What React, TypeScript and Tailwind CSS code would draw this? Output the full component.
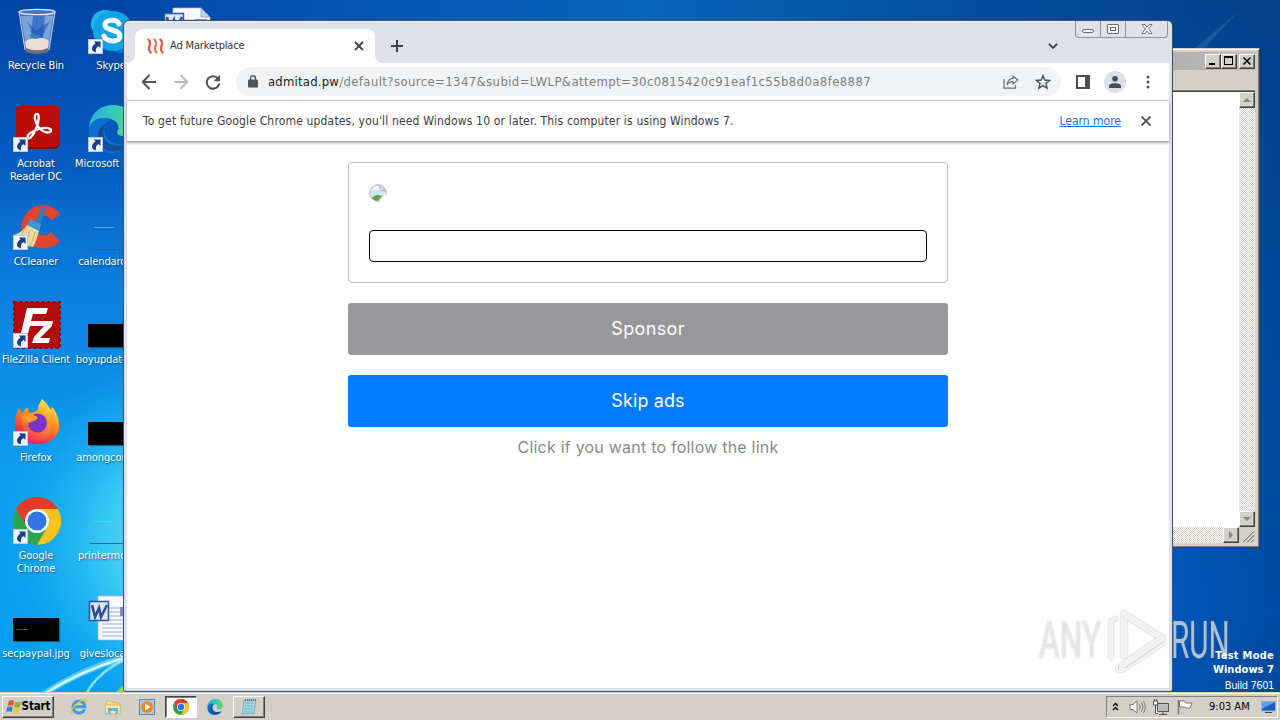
import { ReactNode } from 'react'

interface IShortcut {
    id: string
    label: string
    icon: ReactNode
    arrow?: boolean
}

// Icons of the desktop, all drawn in a 48x48 box
function RecycleBin() {
    return (
        <svg viewBox="0 0 48 48" className="h-12 w-12">
            <path d="M6 5 12 43q12 5 24 0L42 5z" fill="#6f9cdc" fillOpacity=".55" />
            <path d="M8 9l5 31 4-5 3-26zM40 9l-5 31-5-8 2-24z" fill="#dbe9fb" fillOpacity=".4" />
            <path d="M14 14l9 10 14-10-8 16-10-4z" fill="#1d51ae" fillOpacity=".55" />
            <path d="M12 35q5-5 11-3 8-3 13 2l-1 7q-11 5-22 0z" fill="#eadfd2" />
            <path d="M12 41q12 5 24 0l-1 4q-11 4-22 0z" fill="#77706a" />
            <ellipse cx="24" cy="5" rx="18" ry="2.6" fill="#3f75c6" stroke="#e5e8ee" strokeWidth="1.3" />
            <path d="M6 5l6 38M42 5l-6 38" stroke="#c6d9f3" strokeWidth="1" />
        </svg>
    )
}

function Acrobat() {
    return (
        <svg viewBox="0 0 48 48" className="h-12 w-12">
            <rect x="3" y="1" width="44" height="43" rx="6" fill="#7d0f12" />
            <rect x="3" y="0" width="44" height="42" rx="6" fill="#b80e06" />
            <path
                d="M24 9c-4 0-2 9 2 14 4 4 10 6 12 3 1-3-5-4-12-2-7 2-13 6-11 9 3 2 8-8 10-15 1-5 1-9-1-9z"
                fill="none"
                stroke="#fff"
                strokeWidth="2.3"
            />
        </svg>
    )
}

function CCleaner() {
    return (
        <svg viewBox="0 0 48 48" className="h-12 w-12">
            <path
                d="M47 12C41-1 20-2 11 14c-7 14 1 29 15 31 8 1 16-1 21-7l-9-9c-5 5-12 4-15-1-4-7 0-14 6-15 4-1 7 1 9 4z"
                fill="#e2452f"
            />
            <path d="M29 3l4 1-6 18-5-2z" fill="#2a7fb5" />
            <path d="M17 16l11 5-2 8-12-6z" fill="#3a9ad0" />
            <path d="M14 22l12 6q-2 9-6 16Q7 43 1 32q9-3 13-10z" fill="#f1d5a0" />
            <path d="M12 25q-2 6-6 9M17 27q-1 8-6 13M22 29q-1 7-5 14" stroke="#d3ae72" fill="none" />
        </svg>
    )
}

function FileZilla() {
    return (
        <svg viewBox="0 0 48 48" className="h-12 w-12">
            <rect x="1" y="1" width="46" height="46" fill="#b30a0a" stroke="#8d0507" strokeWidth="2" strokeDasharray="3 2.5" />
            <path d="M14 7h21l-2 6H20l-2 7h10l-2 5H17l-4 15H6z" fill="#fff" />
            <path d="M24 20h16l-1 5-12 12h10l-1 5H19l2-6 10-11h-8z" fill="#fff" />
        </svg>
    )
}

function Firefox() {
    return (
        <svg viewBox="0 0 48 48" className="h-12 w-12">
            <defs>
                <linearGradient id="fox" x1=".8" y1="0" x2=".3" y2="1">
                    <stop offset="0" stopColor="#fff44f" />
                    <stop offset=".4" stopColor="#ff9a1f" />
                    <stop offset=".75" stopColor="#ff4136" />
                    <stop offset="1" stopColor="#e31587" />
                </linearGradient>
                <linearGradient id="foxBody" x1=".7" y1="0" x2=".3" y2="1">
                    <stop offset="0" stopColor="#ffb52a" />
                    <stop offset=".5" stopColor="#ff7139" />
                    <stop offset="1" stopColor="#f0305a" />
                </linearGradient>
            </defs>
            <path
                d="M29 0c4 4 7 7 9 11l1-3c5 5 8 14 7 22-2 9-10 15-21 15C12 45 2 37 2 25c0-6 1-9 4-16l3 5 5-6 3 6c5-1 7-2 8-4 0-4 2-6 4-10z"
                fill="url(#fox)"
            />
            <path d="M9 17c5-3 11-1 16 2l10 4c7 10 0 20-10 20S8 32 9 17z" fill="url(#foxBody)" />
            <circle cx="24.500" cy="24" r="9.500" fill="#7a35c7" />
            <path d="M12 16c4-2 9-1 13 3-2 3-6 3-9 5-2-2-4-5-4-8z" fill="#ff9a2a" />
        </svg>
    )
}

function Chrome({ className }: { className: string }) {
    return (
        <svg viewBox="0 0 48 48" className={className}>
            <circle cx="24" cy="24" r="24" fill="#2da44e" />
            <path d="M3.2 12A24 24 0 0 1 44.8 12H24a12 12 0 0 0-10.4 18z" fill="#e33b2e" />
            <path d="M44.8 12A24 24 0 0 1 24 48l10.4-18A12 12 0 0 0 24 12z" fill="#fcc31e" />
            <circle cx="24" cy="24" r="12" fill="#fff" />
            <circle cx="24" cy="24" r="9.6" fill="#3374e0" />
        </svg>
    )
}

function Edge({ className }: { className: string }) {
    return (
        <svg viewBox="0 0 48 48" className={className}>
            <defs>
                <linearGradient id="edgeTop" x1="0" y1=".3" x2="1" y2=".5">
                    <stop offset="0" stopColor="#27b0e2" />
                    <stop offset=".6" stopColor="#39cdb3" />
                    <stop offset="1" stopColor="#66d84f" />
                </linearGradient>
            </defs>
            <path d="M1 23C2 9 12 0 25 0c13 0 23 9 23 19 0 8-6 12-12 12-5 0-7-2-7-4 2-2 3-9-4-12C17 11 5 13 1 23z" fill="url(#edgeTop)" />
            <path d="M1 23c3-9 14-13 23-8-6 1-9 7-7 14 3 9 14 13 27 8-5 7-12 11-20 11C10 48 0 37 1 23z" fill="#0d72ce" />
            <path d="M22 16c-6 3-9 11-5 18 5 8 17 8 27 3-10 13-27 12-33 1-4-9 1-19 11-22z" fill="#124f9f" />
        </svg>
    )
}

function Skype() {
    return (
        <svg viewBox="0 0 48 48" className="h-12 w-12">
            <circle cx="17" cy="17" r="14" fill="#1fb5ea" />
            <circle cx="33" cy="33" r="13" fill="#0b76c8" />
            <circle cx="25" cy="24" r="20" fill="#12a4e4" />
            <path
                d="M31 17c-2-5-14-5-14 1 0 6 15 4 15 11 0 7-14 6-16 0"
                fill="none"
                stroke="#fff"
                strokeWidth="5"
                strokeLinecap="round"
            />
        </svg>
    )
}

function WordFile() {
    return (
        <svg viewBox="0 0 48 48" className="h-12 w-12">
            <path d="M10 1h28l9 9v35H10z" fill="#f7f9ff" stroke="#a9b8dd" strokeWidth=".7" />
            <path d="M38 1v9h9z" fill="#c3cfe8" stroke="#8294c4" strokeWidth=".7" />
            <path d="M14 13h30M14 17h30M14 21h30M14 25h30M14 29h30M14 33h30M14 37h30M14 41h30" stroke="#98acdb" />
            <rect x="32" y="12" width="12" height="9" fill="#7990b8" />
            <rect x="1.5" y="6.500" width="19" height="19" fill="#dbe5fa" stroke="#2f55a8" strokeWidth="1.5" />
            <path d="M4 10l3 12 4-9 2 9 6-12" fill="none" stroke="#2a4f9f" strokeWidth="2.6" />
        </svg>
    )
}

function BlackThumb({ faint }: { faint?: boolean }) {
    return (
        <div className="flex h-12 w-12 items-end pb-[2px]">
            <div className="flex h-[23px] w-[46px] items-center bg-black pl-[3px] shadow-[1px_1px_1px_rgba(0,0,0,.4)]">
                {faint && <div className="h-px w-3 bg-[#5a4b45]" />}
            </div>
        </div>
    )
}

function BlankThumb() {
    return (
        <div className="flex h-12 w-12 flex-col justify-between pt-[24px] pb-px">
            <div className="ml-[6px] h-px w-5 bg-[#8fb8d8]/70" />
            <div className="ml-[2px] h-px bg-[#1c6a94]" />
        </div>
    )
}

function ShortcutArrow() {
    return (
        <svg viewBox="0 0 15 15" className="absolute top-8 left-0 h-[15px] w-[15px]">
            <rect x=".5" y=".5" width="14" height="14" fill="#eef5fd" stroke="#b9c9dc" />
            <path d="M6 2.500h6.500V9L10.500 7C8 8.500 7.500 10 8 13.500 3 12 2.500 8 7.500 4.500z" fill="#173f86" />
        </svg>
    )
}

const shortcuts: IShortcut[] = [
    { id: 'bin', label: 'Recycle Bin', icon: <RecycleBin /> },
    { id: 'acrobat', label: 'Acrobat Reader DC', icon: <Acrobat />, arrow: true },
    { id: 'ccleaner', label: 'CCleaner', icon: <CCleaner />, arrow: true },
    { id: 'filezilla', label: 'FileZilla Client', icon: <FileZilla />, arrow: true },
    { id: 'firefox', label: 'Firefox', icon: <Firefox />, arrow: true },
    { id: 'chrome', label: 'Google Chrome', icon: <Chrome className="h-12 w-12" />, arrow: true },
    { id: 'secpaypal', label: 'secpaypal.jpg', icon: <BlackThumb faint /> },
    { id: 'skype', label: 'Skype', icon: <Skype />, arrow: true },
    { id: 'edge', label: 'Microsoft Edge', icon: <Edge className="h-12 w-12" />, arrow: true },
    { id: 'calendar', label: 'calendarc.jpg', icon: <BlankThumb /> },
    { id: 'boy', label: 'boyupdate.jpg', icon: <BlackThumb /> },
    { id: 'among', label: 'amongcon.jpg', icon: <BlackThumb /> },
    { id: 'printer', label: 'printermo.jpg', icon: <BlankThumb /> },
    { id: 'gives', label: 'giveslocal.rtf', icon: <WordFile /> },
    { id: 'doc', label: '', icon: <WordFile /> }
]

function Shortcut({ label, icon, arrow, id }: IShortcut) {
    // Only Acrobat and Chrome wrap on two lines
    const wrap = id === 'acrobat' || id === 'chrome'
    return (
        <div className="flex h-[98px] w-[75px] flex-col items-center">
            <div className="relative -ml-px h-12 w-12">
                {icon}
                {arrow && <ShortcutArrow />}
            </div>
            <span
                className={`${wrap ? 'w-[62px]' : 'whitespace-nowrap'} mt-1 -ml-[3px] text-center text-[11px] leading-[13px] tracking-[-0.08px] text-white [text-shadow:1px_1px_2px_rgba(0,0,0,.5)]`}
            >
                {label}
            </span>
        </div>
    )
}

function Wallpaper() {
    return (
        <svg viewBox="0 0 1280 720" className="absolute inset-0 h-full w-full">
            <defs>
                <linearGradient id="sky" x1="0" y1="0" x2="0" y2="1">
                    <stop offset="0" stopColor="#0345a5" />
                    <stop offset=".2" stopColor="#0558bd" />
                    <stop offset=".4" stopColor="#0a7fde" />
                    <stop offset=".65" stopColor="#0d9cee" />
                    <stop offset="1" stopColor="#05a0f0" />
                </linearGradient>
                <radialGradient id="glow" gradientUnits="userSpaceOnUse" cx="190" cy="540" r="190">
                    <stop offset="0" stopColor="#7cecf6" />
                    <stop offset=".45" stopColor="#43d3f5" stopOpacity=".8" />
                    <stop offset="1" stopColor="#1aaef2" stopOpacity="0" />
                </radialGradient>
                <linearGradient id="top" x1="0" y1="0" x2="1" y2="0">
                    <stop offset="0" stopColor="#0348aa" />
                    <stop offset=".45" stopColor="#0765bb" />
                    <stop offset=".75" stopColor="#034c9e" />
                    <stop offset="1" stopColor="#034185" />
                </linearGradient>
                <linearGradient id="side" x1="0" y1="0" x2="0" y2="1">
                    <stop offset="0" stopColor="#02458f" />
                    <stop offset=".5" stopColor="#0152ac" />
                    <stop offset=".85" stopColor="#0058bc" />
                    <stop offset="1" stopColor="#0050ae" />
                </linearGradient>
                <linearGradient id="dark" x1="0" y1="0" x2="1" y2="0">
                    <stop offset="0" stopColor="#003a80" stopOpacity="0" />
                    <stop offset="1" stopColor="#003a80" stopOpacity=".4" />
                </linearGradient>
            </defs>
            <rect width="1280" height="720" fill="url(#sky)" />
            <rect width="200" height="720" fill="url(#glow)" />
            <rect x="124" width="1156" height="24" fill="url(#top)" />
            <rect x="1168" width="112" height="720" fill="url(#side)" />
            <rect x="1168" width="112" height="720" fill="url(#dark)" />
            <path d="M1195 48L1238 12 1205 48z" fill="#5b9bd4" fillOpacity=".25" />
            <path d="M44 694Q80 670 126 657" fill="none" stroke="#7fe3fb" strokeOpacity=".6" strokeWidth="6" />
            <path d="M44 694Q80 671 126 657" fill="none" stroke="#e3fdff" strokeOpacity=".9" strokeWidth="2.500" />
            <path d="M86 694Q98 672 126 659" fill="none" stroke="#b8f6fb" strokeOpacity=".7" strokeWidth="2.500" />
            <path d="M114 694l12-12v12z" fill="#8bd84c" />
        </svg>
    )
}

const classicButton =
    'flex items-center justify-center border border-t-white border-l-white border-r-[#404040] border-b-[#404040] bg-[#d4d0c8] shadow-[inset_-1px_-1px_0_#808080]'

const scrollTrack = 'bg-[repeating-conic-gradient(#ffffff_0_25%,#d4d0c8_0_50%)] bg-[length:2px_2px]'

// Old style window, mostly hidden behind the browser
function ClassicWindow() {
    return (
        <div className="absolute top-12 left-[900px] flex h-[500px] w-[360px] flex-col border border-t-[#d4d0c8] border-l-[#d4d0c8] border-r-[#404040] border-b-[#404040] bg-[#d4d0c8] px-1 pt-[3px] pb-1 shadow-[inset_1px_1px_0_#fff,inset_-1px_-1px_0_#808080]">
            <div className="flex h-[18px] items-center justify-end bg-linear-to-r from-[#808080] to-[#c0c0c0]">
                <div className={`${classicButton} h-[15px] w-4`}>
                    <svg viewBox="0 0 12 12" className="h-3 w-3">
                        <path d="M2 8h6v2H2z" />
                    </svg>
                </div>
                <div className={`${classicButton} h-[15px] w-4`}>
                    <svg viewBox="0 0 12 12" className="h-3 w-3">
                        <path d="M1 1h9v9H1zM2 3v6h7V3z" fillRule="evenodd" />
                    </svg>
                </div>
                <div className={`${classicButton} ml-0.5 h-[15px] w-4`}>
                    <svg viewBox="0 0 12 12" className="h-3 w-3">
                        <path d="M2.500 2.500l7 7M9.500 2.500l-7 7" stroke="#000" strokeWidth="1.6" />
                    </svg>
                </div>
            </div>
            <div className="h-[21px] border-b border-[#808080]" />
            <div className="flex flex-1 border-t border-[#404040] bg-white">
                <div className="flex-1" />
                <div className={`${scrollTrack} flex w-4 flex-col justify-between`}>
                    <div className={`${classicButton} h-4`}>
                        <svg viewBox="0 0 8 4" className="h-1 w-2">
                            <path d="M4 0l4 4H0z" fill="#808080" />
                        </svg>
                    </div>
                    <div className={`${classicButton} h-4`}>
                        <svg viewBox="0 0 8 4" className="h-1 w-2">
                            <path d="M4 4l4-4H0z" fill="#808080" />
                        </svg>
                    </div>
                </div>
            </div>
            <div className="flex h-4">
                <div className={`${scrollTrack} flex flex-1 justify-end`}>
                    <div className={`${classicButton} w-4`}>
                        <svg viewBox="0 0 4 8" className="h-2 w-1">
                            <path d="M0 0l4 4-4 4z" fill="#808080" />
                        </svg>
                    </div>
                </div>
                <svg viewBox="0 0 16 16" className="h-4 w-4">
                    <path d="M4 15L15 4M8 15l7-7M12 15l3-3" stroke="#808080" strokeWidth="1.5" />
                    <path d="M3 15L15 3M7 15l8-8M11 15l4-4" stroke="#fff" strokeWidth=".7" />
                </svg>
            </div>
        </div>
    )
}

function TabStrip() {
    return (
        <div className="flex h-[42px] items-end pl-2">
            <div className="relative flex h-[34px] w-60 items-center rounded-t-lg bg-white pr-[11px] pl-[11px]">
                <svg viewBox="0 0 18 16" className="h-4 w-[18px]" fill="none" strokeWidth="2.300" strokeLinecap="round">
                    <path d="M2.500 1.500q2.500 3 1 6.500t1 6.500" stroke="#e2583f" />
                    <path d="M8.500 1.500q2.500 3 1 6.500t1 6.500" stroke="#e77a5e" />
                    <path d="M14.500 1.500q2.500 3 1 6.500t1 6.500" stroke="#db5a50" />
                </svg>
                <span className="ml-1.5 flex-1 pt-px text-[11px] tracking-[-0.15px] text-[#333]">Ad Marketplace</span>
                <svg viewBox="0 0 10 10" className="h-2.5 w-2.5">
                    <path d="M1 1l8 8M9 1L1 9" stroke="#3c4043" strokeWidth="1.8" />
                </svg>
                <svg viewBox="0 0 8 8" className="absolute bottom-0 -left-2 h-2 w-2">
                    <path d="M8 0v8H0a8 8 0 0 0 8-8z" fill="#fff" />
                </svg>
                <svg viewBox="0 0 8 8" className="absolute -right-2 bottom-0 h-2 w-2">
                    <path d="M0 0v8h8a8 8 0 0 1-8-8z" fill="#fff" />
                </svg>
            </div>
            <svg viewBox="0 0 12 12" className="mb-[11px] ml-4 h-3 w-3">
                <path d="M6 0v12M0 6h12" stroke="#3c4043" strokeWidth="2" />
            </svg>
            <svg viewBox="0 0 10 6" className="mr-[111px] mb-[14px] ml-auto h-1.5 w-2.5">
                <path d="M.8.800L5 5 9.200.800" fill="none" stroke="#3c4043" strokeWidth="1.8" />
            </svg>
        </div>
    )
}

function CaptionButtons() {
    return (
        <div className="absolute top-0 right-1 flex h-[17px] rounded-b-[4px] border border-t-0 border-[#8c929e] bg-[#dfe2ea]">
            <div className="flex w-[25px] items-center justify-center border-r border-[#8c929e]">
                <div className="mt-1 h-1 w-3 rounded-[2px] border border-[#696d77] bg-white" />
            </div>
            <div className="flex w-[25px] items-center justify-center border-r border-[#8c929e]">
                <div className="flex h-[10px] w-3 items-center justify-center rounded-[1px] border border-[#696d77] bg-white">
                    <div className="h-1 w-1.5 border border-[#696d77]" />
                </div>
            </div>
            <div className="flex w-[41px] items-center justify-center">
                <svg viewBox="0 0 12 10" className="h-2.5 w-3">
                    <path d="M1 .5h3L6 3 8 .5h3L7.700 5 11 9.500H8L6 7 4 9.500H1L4.300 5z" fill="#fff" stroke="#696d77" strokeWidth=".9" />
                </svg>
            </div>
        </div>
    )
}

function Toolbar() {
    return (
        <div className="flex h-[38px] items-center border-b border-[#d4d6d9] bg-white pl-[14px]">
            <svg viewBox="0 0 16 16" className="h-4 w-4" fill="none" stroke="#505357" strokeWidth="2">
                <path d="M8.500 1L1.800 8l6.700 7M2 8h13" />
            </svg>
            <svg viewBox="0 0 16 16" className="ml-4 h-4 w-4" fill="none" stroke="#b9bbbe" strokeWidth="2">
                <path d="M7.500 1l6.700 7-6.700 7M14 8H1" />
            </svg>
            <svg viewBox="0 0 16 16" className="ml-4 h-4 w-4" fill="none">
                <path d="M13 4.500A6.300 6.300 0 1 0 14.300 9.500" stroke="#505357" strokeWidth="2" />
                <path d="M15 .8v6.400H8.600z" fill="#505357" />
            </svg>
            <div className="ml-[15px] flex h-[29px] w-[825px] items-center rounded-full bg-[#f1f3f4] pl-3">
                <svg viewBox="0 0 10 13" className="h-[13px] w-2.5">
                    <rect y="4.500" width="10" height="8" rx="1" fill="#505357" />
                    <path d="M2.500 5V3.200a2.500 2.500 0 0 1 5 0V5" fill="none" stroke="#505357" strokeWidth="1.4" />
                </svg>
                <span className="ml-[10px] flex-1 pt-px text-[13px] whitespace-nowrap text-[#7b7f83]">
                    <span className="tracking-[0.2px] text-[#202124]">admitad.pw</span>
                    <span className="tracking-[0.39px]">
                        /default?source=1347&amp;subid=LWLP&amp;attempt=30c0815420c91eaf1c55b8d0a8fe8887
                    </span>
                </span>
                <svg viewBox="0 0 16 14" className="h-3.5 w-4" fill="none" stroke="#696c70" strokeWidth="1.2">
                    <path d="M1 4v9.200h11.500V10" />
                    <path d="M10 1l4.800 4L10 9V6.700Q6 6.500 4 10 4.500 4 10 3.300z" />
                </svg>
                <svg viewBox="0 0 24 24" className="mr-[10px] ml-4 h-4 w-4" fill="none" stroke="#505357" strokeWidth="2.200">
                    <path d="M12 2.500l2.700 6.600 7.100.6-5.400 4.600 1.700 7L12 17.500l-6.100 3.800 1.700-7-5.400-4.600 7.100-.6z" />
                </svg>
            </div>
            <svg viewBox="0 0 14 14" className="ml-[15px] h-3.5 w-3.5">
                <path d="M0 0h14v14H0zM2 2v10h7V2z" fill="#4c4f53" fillRule="evenodd" />
            </svg>
            <div className="ml-[14px] flex h-[22px] w-[22px] items-center justify-center rounded-full bg-[#dbe0e8]">
                <svg viewBox="0 0 12 12" className="h-3 w-3" fill="#454d5a">
                    <circle cx="6" cy="2.800" r="2.800" />
                    <path d="M0 12v-1.500Q0 7.300 6 7.300t6 3.200V12z" />
                </svg>
            </div>
            <svg viewBox="0 0 4 14" className="ml-5 h-3.5 w-1" fill="#505357">
                <circle cx="2" cy="2" r="1.500" />
                <circle cx="2" cy="7" r="1.500" />
                <circle cx="2" cy="12" r="1.500" />
            </svg>
        </div>
    )
}

function InfoBar() {
    return (
        <div className="z-10 flex h-[41px] items-center border-b border-[#a9a9a9] bg-white pl-4 text-[12px] shadow-[0_1px_3px_rgba(0,0,0,.35)]">
            <span className="flex-1 tracking-[0.165px] whitespace-nowrap text-[#3c3c3c]">
                To get future Google Chrome updates, you'll need Windows 10 or later. This computer is using Windows 7.
            </span>
            <span className="text-[#1a6fd0] underline">Learn more</span>
            <svg viewBox="0 0 10 10" className="mr-[18px] ml-5 h-2.5 w-2.5">
                <path d="M.5.500l9 9M9.500.500l-9 9" stroke="#4a4d51" strokeWidth="1.8" />
            </svg>
        </div>
    )
}

function Page() {
    return (
        <div className="flex flex-1 flex-col items-center bg-white pt-5 font-['Inter',sans-serif]">
            <div className="h-[121px] w-[600px] rounded-[4px] border border-[#c0c0c0] p-5">
                <svg viewBox="0 0 18 18" className="mt-px h-[18px] w-[18px]">
                    <circle cx="9" cy="9" r="8.300" fill="#d5e4f8" stroke="#b4b8c0" />
                    <path d="M3 5q3-3.500 7-3.500L11 6H3z" fill="#fff" />
                    <path d="M10 1.500L16.500 7 11 5.500z" fill="#fff" stroke="#909499" strokeWidth=".7" />
                    <path d="M3 14q4-5 10-2l-4 5q-4 0-6-3z" fill="#56a844" />
                    <path d="M10 17L17 9v5l-4 3z" fill="#fff" />
                </svg>
                <div className="mt-7 h-8 rounded-[4px] border border-black bg-white" />
            </div>
            <button className="mt-5 h-[52px] w-[600px] rounded-[3px] bg-[#98979c] pb-0.5 text-[18px] tracking-[0.35px] text-white">
                Sponsor
            </button>
            <button className="mt-5 h-[52px] w-[600px] rounded-[3px] bg-[#007aff] pb-0.5 text-[18px] tracking-[0.1px] text-white">
                Skip ads
            </button>
            <p className="mt-2 text-[16px] tracking-[0.22px] text-[#8a8a8a]">Click if you want to follow the link</p>
        </div>
    )
}

function Browser() {
    return (
        <div className="absolute top-5 left-[123px] flex h-[672px] w-[1050px] flex-col rounded-t-md rounded-b-[3px] border border-[#3d506b] bg-[#dee1ea] px-[3px] pb-[3px] shadow-[inset_0_1px_0_#f4f4f4]">
            <TabStrip />
            <CaptionButtons />
            <Toolbar />
            <InfoBar />
            <Page />
        </div>
    )
}

// Logo printed over the bottom right corner
function Watermark() {
    const word =
        'inline-block origin-left font-["Roboto",sans-serif] text-[52px] leading-none font-normal text-white/60 [text-shadow:0_0_2px_rgba(120,120,120,.5)]'
    return (
        <div className="absolute top-[606px] left-[1039px] flex h-[70px] w-[196px] items-center">
            <div className="w-[66px]">
                <span className={`${word} scale-x-[.61]`}>ANY</span>
            </div>
            <svg
                viewBox="0 0 64 70"
                className="h-[70px] w-16 drop-shadow-[0_0_1px_rgba(100,100,100,.6)]"
                fill="none"
                stroke="#fff"
                strokeOpacity=".8"
                strokeLinejoin="round"
            >
                <path d="M19 52V8L57 32 17 60v4" strokeWidth="6" />
                <path d="M6 53V15l6-3" strokeWidth="4" />
                <path d="M12 60v5h6L60 37" strokeWidth="2" />
            </svg>
            <div className="ml-0.5 w-16">
                <span className={`${word} scale-x-[.57]`}>RUN</span>
            </div>
        </div>
    )
}

function Taskbar() {
    return (
        <div className="absolute bottom-0 left-0 flex h-7 w-full items-center border-t border-[#d4d0c8] bg-[#d4d0c8] pt-px pr-0.5 pl-[2px] shadow-[inset_0_1px_0_#fff]">
            <div className={`${classicButton} h-[22px] w-[52px] text-[11.5px] font-bold text-black`}>
                <svg viewBox="0 0 16 16" className="h-4 w-4 shrink-0">
                    <path d="M3 2q3-2 5 0L7 7Q5 5.500 1.500 7z" fill="#e8532a" />
                    <path d="M9 2.500q3 1.500 6 0L14 8q-3 1-6-.500z" fill="#7cb83a" />
                    <path d="M1.300 8q3-1.500 5.500 0l-1 5Q3.500 11.500 0 13z" fill="#3c7fd6" />
                    <path d="M7.800 8.500q3 1.500 6 .3l-1.300 5q-3 1-5.700-.5z" fill="#f6c32c" />
                </svg>
                <span className="tracking-[-0.1px]">Start</span>
            </div>
            <svg viewBox="0 0 18 18" className="ml-4 h-[18px] w-[18px]" fill="none">
                <path d="M14.500 11.500A6 6 0 1 1 15 8.800H4" stroke="#3b9fe0" strokeWidth="3" />
                <path d="M2 16C-1 12 8 2 15 2q3 0 1.500 3" stroke="#e8bd43" strokeWidth="1.400" />
            </svg>
            <svg viewBox="0 0 18 18" className="ml-4 h-[18px] w-[18px]">
                <path d="M2 3h6l1 2h7v6H2z" fill="#f2dc86" stroke="#cda948" strokeWidth=".7" />
                <path d="M1 7h16l-1 9H2z" fill="#f9eaa8" stroke="#cda948" strokeWidth=".7" />
                <path d="M4 16v-6h10v6h-2.500v-3h-5v3z" fill="#68b3df" />
            </svg>
            <svg viewBox="0 0 16 16" className="ml-[17px] h-4 w-4">
                <rect x=".5" y=".5" width="15" height="15" fill="#a9cbea" stroke="#5a86b0" />
                <circle cx="8" cy="8" r="6" fill="#f2871c" />
                <path d="M6 4.500L11.500 8 6 11.500z" fill="#fff" />
            </svg>
            <div className="ml-2.5 flex h-[22px] w-8 items-center justify-center border border-t-[#404040] border-r-white border-b-white border-l-[#404040] bg-white shadow-[inset_1px_1px_0_#808080]">
                <Chrome className="h-4 w-4" />
            </div>
            <Edge className="ml-2.5 h-4 w-4" />
            <div className={`${classicButton} ml-2.5 h-[22px] w-8`}>
                <svg viewBox="0 0 16 18" className="h-[18px] w-4">
                    <path d="M3 2h12l-2 14H1z" fill="#a4d6e2" stroke="#6d9fb0" strokeWidth=".7" />
                    <path d="M4 5h9M3.600 8h9M3.200 11h9M2.800 14h9" stroke="#5f9cb0" strokeWidth=".6" />
                    <path d="M4 2h11" stroke="#66737a" strokeWidth="1.800" strokeDasharray="1 1" />
                </svg>
            </div>
            <div className="ml-auto flex h-[22px] w-[172px] items-center border border-t-[#808080] border-r-white border-b-white border-l-[#808080] pl-[5px]">
                <svg viewBox="0 0 7 9" className="mb-0.5 h-[9px] w-[7px]" fill="none" stroke="#000" strokeWidth="1.300">
                    <path d="M1 4l2.500-2.500L6 4M1 8l2.500-2.500L6 8" />
                </svg>
                <svg viewBox="0 0 17 16" className="ml-2.5 h-4 w-[17px]" fill="none" stroke="#777">
                    <path d="M1 5.500h3L8 2v12L4 10.500H1z" fill="#fff" />
                    <path d="M10.500 5.500q1.500 2.500 0 5M12.500 3.500q3 4.500 0 9M14.500 2q3.500 6 0 12" />
                </svg>
                <svg viewBox="0 0 16 16" className="ml-[7px] h-4 w-4" fill="none" stroke="#555">
                    <rect x="4.500" y="4.500" width="11" height="8" fill="#bcbcbc" />
                    <path d="M6 15.500h8M10 13v2" />
                    <path d="M.5 2v4h4V2zM2.500 6v8.500H5M1.500 0v2M3.500 0v2" fill="#fff" />
                </svg>
                <svg viewBox="0 0 16 16" className="ml-2 h-4 w-4" fill="#fff" stroke="#777">
                    <path d="M1.500 1v14.500" strokeWidth="1.500" />
                    <path d="M2.500 2h5l1.500 2h6l-2 5H9L7.500 8h-5z" />
                </svg>
                <span className="ml-4 text-[11px] whitespace-nowrap text-black">9:03 AM</span>
                <svg viewBox="0 0 15 14" className="ml-[11px] h-3.5 w-[15px]">
                    <rect x=".5" y="1.500" width="14" height="9.500" fill="#1d60bb" stroke="#9fb4cc" />
                    <path d="M1 2h13L1 9z" fill="#5aa0e8" />
                    <path d="M4 12.500h7" stroke="#36465c" />
                </svg>
            </div>
        </div>
    )
}

export default function App() {
    return (
        <div className="relative h-[720px] w-[1280px] overflow-hidden bg-[#0558bd] font-['DejaVu_Sans_Condensed','DejaVu_Sans',sans-serif]">
            <Wallpaper />
            <div className="relative grid w-max grid-flow-col grid-rows-[repeat(7,98px)] pt-[7px]">
                {shortcuts.map(item => (
                    <Shortcut key={item.id} {...item} />
                ))}
            </div>
            <ClassicWindow />
            <Browser />
            <Watermark />
            <div className="absolute right-[6px] bottom-[27px] text-right text-[11px] leading-[14px] text-white">
                <p className="font-bold tracking-[0.25px]">Test Mode</p>
                <p className="font-bold tracking-[0.05px]">Windows 7</p>
                <p className="mt-0.5 tracking-[-0.4px]">Build 7601</p>
            </div>
            <Taskbar />
        </div>
    )
}
